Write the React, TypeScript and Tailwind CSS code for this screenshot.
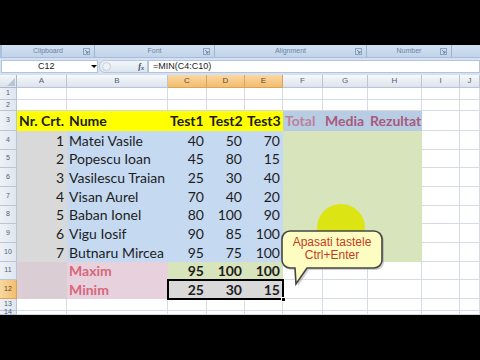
import React from 'react';

type Spec = { t?: string; bg: string; al?: 'l' | 'r'; b?: boolean; c?: string };

const BG: Record<string, string> = {
  w: 'bg-white border-r border-b border-[#d5dbe5]',
  y: 'bg-[#ffff00]',
  b: 'bg-[#c5d9f1]',
  bh: 'bg-[#b8cce4]',
  g: 'bg-[#d9d9d9]',
  gr: 'bg-[#d8e4bc]',
  pa: 'bg-[#dacdd4]',
  pb: 'bg-[#e6d1dc]',
};

const TC: Record<string, string> = {
  k: 'text-[#1d1d1d]',
  p: 'text-[#d8677c]',
  m: 'text-[#a85a7c]',
  mt: 'text-[#bb8299]',
};

const COLS = ['A', 'B', 'C', 'D', 'E', 'F', 'G', 'H', 'I', 'J'];
const SEL_COLS = ['C', 'D', 'E'];

const DATA: string[][] = [
  ['1', 'Matei Vasile', '40', '50', '70'],
  ['2', 'Popescu Ioan', '45', '80', '15'],
  ['3', 'Vasilescu Traian', '25', '30', '40'],
  ['4', 'Visan Aurel', '70', '40', '20'],
  ['5', 'Baban Ionel', '80', '100', '90'],
  ['6', 'Vigu Iosif', '90', '85', '100'],
  ['7', 'Butnaru Mircea', '95', '75', '100'],
];

const W = (): Spec => ({ bg: 'w' });

function rowSpecs(r: number): Spec[] {
  if (r === 3) {
    return [
      { t: 'Nr. Crt.', bg: 'y', al: 'l', b: true },
      { t: 'Nume', bg: 'y', al: 'l', b: true },
      { t: 'Test1', bg: 'y', al: 'l', b: true },
      { t: 'Test2', bg: 'y', al: 'l', b: true },
      { t: 'Test3', bg: 'y', al: 'l', b: true },
      { t: 'Total', bg: 'bh', al: 'l', b: true, c: 'mt' },
      { t: 'Media', bg: 'bh', al: 'l', b: true, c: 'm' },
      { t: 'Rezultat', bg: 'bh', al: 'l', b: true, c: 'm' },
      W(),
      W(),
    ];
  }
  if (r >= 4 && r <= 10) {
    const d = DATA[r - 4];
    return [
      { t: d[0], bg: 'g', al: 'r' },
      { t: d[1], bg: 'b', al: 'l' },
      { t: d[2], bg: 'b', al: 'r' },
      { t: d[3], bg: 'b', al: 'r' },
      { t: d[4], bg: 'b', al: 'r' },
      { bg: 'gr' },
      { bg: 'gr' },
      { bg: 'gr' },
      W(),
      W(),
    ];
  }
  if (r === 11) {
    return [
      { bg: 'pa' },
      { t: 'Maxim', bg: 'pb', al: 'l', b: true, c: 'p' },
      { t: '95', bg: 'gr', al: 'r', b: true },
      { t: '100', bg: 'gr', al: 'r', b: true },
      { t: '100', bg: 'gr', al: 'r', b: true },
      W(),
      W(),
      W(),
      W(),
      W(),
    ];
  }
  if (r === 12) {
    return [
      { bg: 'pa' },
      { t: 'Minim', bg: 'pb', al: 'l', b: true, c: 'p' },
      { t: '25', bg: 'g', al: 'r', b: true },
      { t: '30', bg: 'g', al: 'r', b: true },
      { t: '15', bg: 'g', al: 'r', b: true },
      W(),
      W(),
      W(),
      W(),
      W(),
    ];
  }
  return COLS.map(() => W());
}

function Cell({ s }: { s: Spec }) {
  const align = s.al === 'r' ? 'justify-end pr-[3px]' : 'justify-start pl-[2px]';
  const weight = s.b ? 'font-bold' : 'font-normal';
  const color = TC[s.c || 'k'];
  return (
    <div
      className={`${BG[s.bg]} ${align} ${weight} ${color} flex items-center overflow-hidden whitespace-nowrap text-[14px] leading-none`}
    >
      {s.t}
    </div>
  );
}

function Launcher() {
  return (
    <svg width="7" height="7" viewBox="0 0 7 7" className="ml-auto mr-[4px]">
      <rect x="0.5" y="0.5" width="6" height="6" fill="none" stroke="#8ea3c0" strokeWidth="1" />
      <path d="M2 2 L5 5 M5 3 V5 H3" stroke="#5f7597" strokeWidth="0.8" fill="none" />
    </svg>
  );
}

function Group({ label, w }: { label: string; w: string }) {
  return (
    <div className={`${w} h-full flex items-center border-r border-[#9fb3cf] bg-linear-to-b from-[#d3e0f0] to-[#c2d4ea] relative`}>
      <span className="absolute inset-0 flex items-center justify-center text-[7px] text-[#6c82a6]">{label}</span>
      <Launcher />
    </div>
  );
}

export default function App() {
  const rowHeaders = [1, 2, 3, 4, 5, 6, 7, 8, 9, 10, 11, 12, 13, 14];
  return (
    <div
      className="w-[480px] h-[360px] bg-black overflow-hidden flex flex-col relative"
      style={{ fontFamily: 'Lato, "Liberation Sans", sans-serif' }}
    >
      <div className="h-[45px] bg-black shrink-0" />
      {/* ribbon group labels */}
      <div className="h-[12px] shrink-0 flex bg-[#c5d6ec]" style={{ fontFamily: '"Liberation Sans", Arial, sans-serif' }}>
        <div className="w-[2px] h-full bg-[#a9c0de]" />
        <Group label="Clipboard" w="w-[93px]" />
        <Group label="Font" w="w-[120px]" />
        <Group label="Alignment" w="w-[152px]" />
        <Group label="Number" w="w-[85px]" />
        <div className="flex-1 h-full bg-linear-to-b from-[#d3e0f0] to-[#c2d4ea]" />
      </div>
      {/* formula bar */}
      <div
        className="h-[18px] shrink-0 bg-[#d5e1f0] border-t border-[#a7bcd8] flex items-center pl-[1px]"
        style={{ fontFamily: '"Liberation Sans", Arial, sans-serif' }}
      >
        <div className="w-[97px] h-[13px] bg-white border border-[#b3c5dc] flex items-center relative">
          <span className="absolute left-[36px] text-[9px] text-[#222]">C12</span>
          <span className="absolute left-[89px] top-[4px] w-0 h-0 border-l-[3px] border-r-[3px] border-t-[3px] border-l-transparent border-r-transparent border-t-black" />
        </div>
        <div className="w-[49px] h-[13px] ml-[1px] rounded-l-[6px] bg-linear-to-b from-[#f3f6fa] to-[#dde5ef] border border-[#b7c6d9] flex items-center relative">
          <span className="absolute left-[2px] top-[1px] w-[9px] h-[9px] rounded-full border border-[#c3cedb] bg-[#eef2f7]" />
          <span className="absolute right-[3px] text-[8px] italic font-bold text-[#3c4a60]" style={{ fontFamily: '"Liberation Serif", serif' }}>
            f<sub className="text-[6px]">x</sub>
          </span>
        </div>
        <div className="flex-1 h-[13px] bg-white border border-[#b3c5dc] flex items-center pl-[4px]">
          <span className="text-[9px] text-[#222]">=MIN(C4:C10)</span>
        </div>
      </div>
      {/* sheet grid */}
      <div className="relative h-[240px] shrink-0 bg-white grid grid-cols-[17px_50px_101px_39px_38px_38px_40px_45px_54px_38px_1fr] grid-rows-[13px_12px_11px_20px_19px_18px_19px_19px_18px_19px_19px_18px_19px_12px_4px] overflow-hidden">
        {/* corner */}
        <div className="bg-linear-to-b from-[#f3f6fa] to-[#dce3ec] border-r border-b border-[#a9b8cb] relative">
          <svg width="8" height="8" viewBox="0 0 8 8" className="absolute right-[1px] bottom-[1px]">
            <path d="M8 0 L8 8 L0 8 Z" fill="#b9c6d8" />
          </svg>
        </div>
        {COLS.map((c) => (
          <div
            key={c}
            className={
              SEL_COLS.includes(c)
                ? 'bg-linear-to-b from-[#fad7a2] to-[#f3bd6c] border-r border-b border-[#d9a55c] flex items-center justify-center text-[8px] text-[#5a4a30]'
                : 'bg-linear-to-b from-[#f6f8fb] to-[#dde4ed] border-r border-b border-[#b9c5d5] flex items-center justify-center text-[8px] text-[#4f6079]'
            }
            style={{ fontFamily: '"Liberation Sans", Arial, sans-serif' }}
          >
            {c}
          </div>
        ))}
        {rowHeaders.map((r) => (
          <React.Fragment key={r}>
            <div
              className={
                r === 12
                  ? 'bg-linear-to-r from-[#fad7a2] to-[#f3bd6c] border-r border-b border-[#d9a55c] flex items-center justify-center text-[7px] text-[#5a4a30]'
                  : 'bg-linear-to-r from-[#eef2f7] to-[#dfe6ef] border-r border-b border-[#b9c5d5] flex items-center justify-center text-[7px] text-[#4f6079]'
              }
              style={{ fontFamily: '"Liberation Sans", Arial, sans-serif' }}
            >
              {r}
            </div>
            {rowSpecs(r).map((s, i) => (
              <Cell key={i} s={s} />
            ))}
          </React.Fragment>
        ))}
        {/* selection border C12:E12 */}
        <div className="absolute col-start-4 col-end-7 row-start-13 row-end-14 inset-[-1px] border-2 border-black pointer-events-none">
          <div className="absolute right-[-4px] bottom-[-4px] w-[5px] h-[5px] bg-black border border-white" />
        </div>
      </div>
      <div className="flex-1 bg-black" />

      {/* cursor highlight */}
      <div className="absolute left-[317px] top-[204px] w-[48px] h-[48px] rounded-full bg-[#dce414]" />

      {/* callout */}
      <svg width="110" height="62" viewBox="0 0 110 62" className="absolute left-[280px] top-[229px]">
        <path
          d="M12,4 H96 A8,8 0 0 1 104,12 V33 A8,8 0 0 1 96,41 H29 L18,57 L17,41 H12 A8,8 0 0 1 4,33 V12 A8,8 0 0 1 12,4 Z"
          fill="#9a9a9a"
          opacity="0.45"
        />
        <path
          d="M10,2 H94 A8,8 0 0 1 102,10 V31 A8,8 0 0 1 94,39 H27 L16,55 L15,39 H10 A8,8 0 0 1 2,31 V10 A8,8 0 0 1 10,2 Z"
          fill="#fdfdc2"
          stroke="#454545"
          strokeWidth="1.6"
        />
      </svg>
      <div
        className="absolute left-[282px] top-[236px] w-[100px] flex flex-col items-center text-[12px] leading-[13px] text-[#c43c1c]"
        style={{ fontFamily: '"Liberation Sans", Arial, sans-serif' }}
      >
        <span>Apasati tastele</span>
        <span>Ctrl+Enter</span>
      </div>
    </div>
  );
}
